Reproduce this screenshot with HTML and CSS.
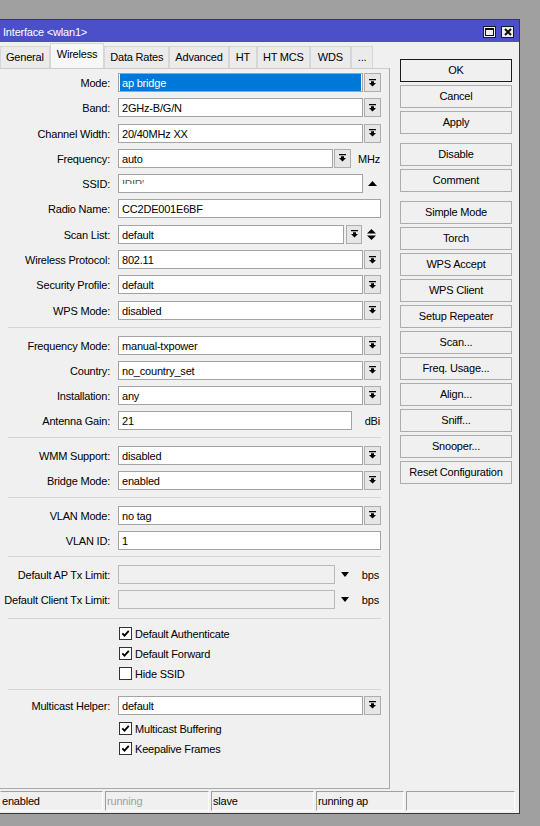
FILE: index.html
```html
<!DOCTYPE html>
<html>
<head>
<meta charset="utf-8">
<title>Interface wlan1</title>
<link rel="stylesheet" href="styles.css">
</head>
<body>
<div class="window">
  <div class="titlebar">
    <span class="title">Interface &lt;wlan1&gt;</span>
    <div class="tb-buttons">
      <span class="tb-btn"><svg width="9" height="8" viewBox="0 0 9 8"><path d="M0 0h9v8H0z M1 2v5h7V2z" fill="#111" fill-rule="evenodd"/></svg></span>
      <span class="tb-btn"><svg width="8" height="8" viewBox="0 0 8 8"><path d="M1 1L7 7M7 1L1 7" stroke="#111" stroke-width="2"/></svg></span>
    </div>
  </div>
  <div class="content">
    <div class="left">
      <div class="tabs">
        <div class="tab">General</div>
        <div class="tab active">Wireless</div>
        <div class="tab">Data Rates</div>
        <div class="tab">Advanced</div>
        <div class="tab tab-wide">HT</div>
        <div class="tab">HT MCS</div>
        <div class="tab tab-wider">WDS</div>
        <div class="tab tab-wide">...</div>
      </div>
      <div class="panel">
        <div class="group g1">
          <div class="row"><span class="lbl">Mode:</span><div class="field hl"><span class="hl-text">ap bridge</span></div><span class="dd"><svg width="7" height="8" viewBox="0 0 7 8"><path d="M0 0h7v1.3H0zM2 2.3h3v1.7h2L3.5 7.6 0 4h2z"/></svg></span></div>
          <div class="row"><span class="lbl">Band:</span><div class="field">2GHz-B/G/N</div><span class="dd"><svg width="7" height="8" viewBox="0 0 7 8"><path d="M0 0h7v1.3H0zM2 2.3h3v1.7h2L3.5 7.6 0 4h2z"/></svg></span></div>
          <div class="row"><span class="lbl">Channel Width:</span><div class="field">20/40MHz XX</div><span class="dd"><svg width="7" height="8" viewBox="0 0 7 8"><path d="M0 0h7v1.3H0zM2 2.3h3v1.7h2L3.5 7.6 0 4h2z"/></svg></span></div>
          <div class="row"><span class="lbl">Frequency:</span><div class="field">auto</div><span class="dd"><svg width="7" height="8" viewBox="0 0 7 8"><path d="M0 0h7v1.3H0zM2 2.3h3v1.7h2L3.5 7.6 0 4h2z"/></svg></span><span class="unit">MHz</span></div>
          <div class="row"><span class="lbl">SSID:</span><div class="field"><span class="clip">IPIP'</span></div><span class="side"><svg width="9" height="5" viewBox="0 0 9 5"><path d="M0 5h9L4.5 0z"/></svg></span></div>
          <div class="row"><span class="lbl">Radio Name:</span><div class="field">CC2DE001E6BF</div></div>
          <div class="row"><span class="lbl">Scan List:</span><div class="field">default</div><span class="dd dd-scan"><svg width="7" height="8" viewBox="0 0 7 8"><path d="M0 0h7v1.3H0zM2 2.3h3v1.7h2L3.5 7.6 0 4h2z"/></svg></span><span class="side side-scan"><svg width="9" height="11" viewBox="0 0 9 11"><path d="M0 4.5h9L4.5 0zM0 6.5h9L4.5 11z"/></svg></span></div>
          <div class="row"><span class="lbl">Wireless Protocol:</span><div class="field">802.11</div><span class="dd"><svg width="7" height="8" viewBox="0 0 7 8"><path d="M0 0h7v1.3H0zM2 2.3h3v1.7h2L3.5 7.6 0 4h2z"/></svg></span></div>
          <div class="row"><span class="lbl">Security Profile:</span><div class="field">default</div><span class="dd"><svg width="7" height="8" viewBox="0 0 7 8"><path d="M0 0h7v1.3H0zM2 2.3h3v1.7h2L3.5 7.6 0 4h2z"/></svg></span></div>
          <div class="row"><span class="lbl">WPS Mode:</span><div class="field">disabled</div><span class="dd"><svg width="7" height="8" viewBox="0 0 7 8"><path d="M0 0h7v1.3H0zM2 2.3h3v1.7h2L3.5 7.6 0 4h2z"/></svg></span></div>
        </div>
        <div class="sep"></div>
        <div class="group">
          <div class="row"><span class="lbl">Frequency Mode:</span><div class="field">manual-txpower</div><span class="dd"><svg width="7" height="8" viewBox="0 0 7 8"><path d="M0 0h7v1.3H0zM2 2.3h3v1.7h2L3.5 7.6 0 4h2z"/></svg></span></div>
          <div class="row"><span class="lbl">Country:</span><div class="field">no_country_set</div><span class="dd"><svg width="7" height="8" viewBox="0 0 7 8"><path d="M0 0h7v1.3H0zM2 2.3h3v1.7h2L3.5 7.6 0 4h2z"/></svg></span></div>
          <div class="row"><span class="lbl">Installation:</span><div class="field">any</div><span class="dd"><svg width="7" height="8" viewBox="0 0 7 8"><path d="M0 0h7v1.3H0zM2 2.3h3v1.7h2L3.5 7.6 0 4h2z"/></svg></span></div>
          <div class="row"><span class="lbl">Antenna Gain:</span><div class="field">21</div><span class="unit unit-dbi">dBi</span></div>
        </div>
        <div class="sep"></div>
        <div class="group">
          <div class="row"><span class="lbl">WMM Support:</span><div class="field">disabled</div><span class="dd"><svg width="7" height="8" viewBox="0 0 7 8"><path d="M0 0h7v1.3H0zM2 2.3h3v1.7h2L3.5 7.6 0 4h2z"/></svg></span></div>
          <div class="row"><span class="lbl">Bridge Mode:</span><div class="field">enabled</div><span class="dd"><svg width="7" height="8" viewBox="0 0 7 8"><path d="M0 0h7v1.3H0zM2 2.3h3v1.7h2L3.5 7.6 0 4h2z"/></svg></span></div>
        </div>
        <div class="sep"></div>
        <div class="group g4">
          <div class="row"><span class="lbl">VLAN Mode:</span><div class="field">no tag</div><span class="dd"><svg width="7" height="8" viewBox="0 0 7 8"><path d="M0 0h7v1.3H0zM2 2.3h3v1.7h2L3.5 7.6 0 4h2z"/></svg></span></div>
          <div class="row"><span class="lbl">VLAN ID:</span><div class="field">1</div></div>
        </div>
        <div class="sep"></div>
        <div class="group g5">
          <div class="row"><span class="lbl">Default AP Tx Limit:</span><div class="field disabled"></div><span class="tri"><svg width="8" height="5" viewBox="0 0 8 5"><path d="M0 0h8L4 5z"/></svg></span><span class="unit unit-bps">bps</span></div>
          <div class="row"><span class="lbl">Default Client Tx Limit:</span><div class="field disabled"></div><span class="tri"><svg width="8" height="5" viewBox="0 0 8 5"><path d="M0 0h8L4 5z"/></svg></span><span class="unit unit-bps">bps</span></div>
        </div>
        <div class="sep"></div>
        <div class="group g6">
          <div class="chk-row"><span class="box"><svg width="9" height="9" viewBox="0 0 9 9"><path d="M1.3 4.3L3.5 6.6 7.8 1.8" fill="none" stroke="#000" stroke-width="1.8"/></svg></span>Default Authenticate</div>
          <div class="chk-row"><span class="box"><svg width="9" height="9" viewBox="0 0 9 9"><path d="M1.3 4.3L3.5 6.6 7.8 1.8" fill="none" stroke="#000" stroke-width="1.8"/></svg></span>Default Forward</div>
          <div class="chk-row"><span class="box"></span>Hide SSID</div>
        </div>
        <div class="sep"></div>
        <div class="group g7">
          <div class="row"><span class="lbl">Multicast Helper:</span><div class="field">default</div><span class="dd"><svg width="7" height="8" viewBox="0 0 7 8"><path d="M0 0h7v1.3H0zM2 2.3h3v1.7h2L3.5 7.6 0 4h2z"/></svg></span></div>
          <div class="chk-list">
            <div class="chk-row"><span class="box"><svg width="9" height="9" viewBox="0 0 9 9"><path d="M1.3 4.3L3.5 6.6 7.8 1.8" fill="none" stroke="#000" stroke-width="1.8"/></svg></span>Multicast Buffering</div>
            <div class="chk-row"><span class="box"><svg width="9" height="9" viewBox="0 0 9 9"><path d="M1.3 4.3L3.5 6.6 7.8 1.8" fill="none" stroke="#000" stroke-width="1.8"/></svg></span>Keepalive Frames</div>
          </div>
        </div>
      </div>
    </div>
    <div class="buttons">
      <div class="btn default">OK</div>
      <div class="btn">Cancel</div>
      <div class="btn">Apply</div>
      <div class="btn grp">Disable</div>
      <div class="btn">Comment</div>
      <div class="btn grp">Simple Mode</div>
      <div class="btn">Torch</div>
      <div class="btn">WPS Accept</div>
      <div class="btn">WPS Client</div>
      <div class="btn">Setup Repeater</div>
      <div class="btn">Scan...</div>
      <div class="btn">Freq. Usage...</div>
      <div class="btn">Align...</div>
      <div class="btn">Sniff...</div>
      <div class="btn">Snooper...</div>
      <div class="btn">Reset Configuration</div>
    </div>
  </div>
  <div class="status">
    <div class="cell c1">enabled</div>
    <div class="cell c2 dim">running</div>
    <div class="cell c3">slave</div>
    <div class="cell c4">running ap</div>
    <div class="cell c5"></div>
  </div>
</div>
</body>
</html>
```

FILE: styles.css
```css
* { box-sizing: border-box; }
html, body { margin: 0; padding: 0; }
body {
  background: #a0a0a0;
  font-family: "Liberation Sans", Arial, sans-serif;
  font-size: 11px;
  letter-spacing: -0.2px;
  color: #000;
  width: 540px;
  height: 826px;
  overflow: hidden;
}
.window {
  margin-top: 19px;
  width: 520px;
  height: 795px;
  background: #f0f0f0;
  border-top: 1px solid #3a3a3a;
  border-right: 1px solid #3a3a3a;
  border-bottom: 1px solid #3a3a3a;
  display: flex;
  flex-direction: column;
}
.titlebar {
  height: 22px;
  flex: none;
  background: #4b50c8;
  color: #fff;
  display: flex;
  align-items: center;
  justify-content: space-between;
  padding: 1px 5px 0 3px;
}
.title { line-height: 20px; }
.tb-buttons { display: flex; gap: 5px; }
.tb-btn {
  width: 13px;
  height: 12px;
  background: #f0f0f0;
  border: 1px solid #1a1a1a;
  display: flex;
  align-items: center;
  justify-content: center;
}
.content { display: flex; flex: none; height: 747px; }
.left { width: 390px; display: flex; flex-direction: column; flex: none; }
.tabs { height: 26px; display: flex; align-items: flex-end; flex: none; }
.tab {
  height: 22px;
  padding: 0 5px;
  border: 1px solid #d6d6d6;
  border-bottom: none;
  background: #ebebeb;
  line-height: 21px;
  white-space: nowrap;
}
.tab-wide { padding: 0 6px; }
.tab-wider { padding: 0 7px; }
.tab.active {
  height: 25px;
  background: #f7f7f7;
  padding: 0 6px;
}
.panel {
  height: 721px;
  flex: none;
  border-top: 1px solid #cdcdcd;
  border-right: 1px solid #a8a8a8;
  border-bottom: 1px solid #a8a8a8;
}
.group {
  display: flex;
  flex-direction: column;
  gap: 6px;
  padding: 8px 8px 7px 0;
}
.g1 { padding-top: 4px; gap: 6.3px; }
.g4 { padding-bottom: 6px; }
.g5 { padding-bottom: 9px; }
.g6 { padding-top: 5px; padding-bottom: 5px; gap: 0; }
.g7 { padding-top: 6px; gap: 4px; }
.sep { height: 1px; background: #d4d4d4; margin: 0 8px; }
.row { display: flex; height: 19px; }
.lbl {
  width: 110px;
  margin-right: 8px;
  text-align: right;
  line-height: 21px;
  white-space: nowrap;
  flex: none;
}
.field {
  flex: 1;
  min-width: 0;
  background: #fff;
  border: 1px solid #a3a3a3;
  padding: 1px 0 0 3px;
  line-height: 17px;
  white-space: nowrap;
  overflow: hidden;
}
.field.disabled { background: #f0f0f0; border-color: #b9b9b9; }
.field.hl { padding: 0 1px; }
.hl-text {
  display: block;
  height: 17px;
  background: #0078d7;
  color: #fff;
  padding-left: 2px;
  line-height: 19px;
}
.clip {
  display: block;
  height: 8px;
  overflow: hidden;
  color: #555;
}
.dd {
  width: 17px;
  margin-left: 1px;
  flex: none;
  border: 1px solid #adadad;
  background: #e6e6e6;
  display: flex;
  align-items: center;
  justify-content: center;
}
.dd svg { fill: #000; }
.dd-scan { width: 16px; margin-left: 2px; }
.side {
  width: 18px;
  flex: none;
  display: flex;
  align-items: center;
  justify-content: center;
}
.side-scan { width: 19px; }
.unit {
  width: 30px;
  flex: none;
  text-align: right;
  padding-right: 1px;
  line-height: 21px;
}
.unit-dbi { width: 29px; }
.unit-bps { width: 26px; padding-right: 2px; }
.tri {
  width: 20px;
  flex: none;
  display: flex;
  align-items: center;
  justify-content: center;
}
.chk-list { display: flex; flex-direction: column; }
.chk-row {
  display: flex;
  align-items: center;
  height: 20px;
  padding-left: 119px;
  white-space: nowrap;
  line-height: 20px;
}
.box {
  width: 13px;
  height: 13px;
  flex: none;
  border: 1px solid #333;
  background: #fff;
  margin-right: 3px;
  display: flex;
  align-items: center;
  justify-content: center;
}
.buttons {
  margin-left: 10px;
  padding-top: 17px;
  width: 112px;
  flex: none;
  display: flex;
  flex-direction: column;
  gap: 3px;
}
.btn {
  height: 23px;
  flex: none;
  border: 1px solid #adadad;
  background: #f0f0f0;
  text-align: center;
  line-height: 21px;
  white-space: nowrap;
}
.btn.default { border-color: #1a1a1a; }
.btn.grp { margin-top: 6px; }
.status {
  display: flex;
  gap: 2px;
  margin-top: 2px;
  height: 20px;
  flex: none;
}
.cell {
  height: 20px;
  border-top: 1px solid #a0a0a0;
  border-left: 1px solid #a0a0a0;
  border-right: 1px solid #fff;
  border-bottom: 1px solid #fff;
  padding-left: 1px;
  line-height: 19px;
  white-space: nowrap;
}
.c1 { width: 103px; border-left-color: #f0f0f0; }
.c2 { width: 104px; }
.c3 { width: 103px; }
.c4 { width: 88px; }
.c5 { width: 109px; }
.dim { color: #a0a0a0; }
```
